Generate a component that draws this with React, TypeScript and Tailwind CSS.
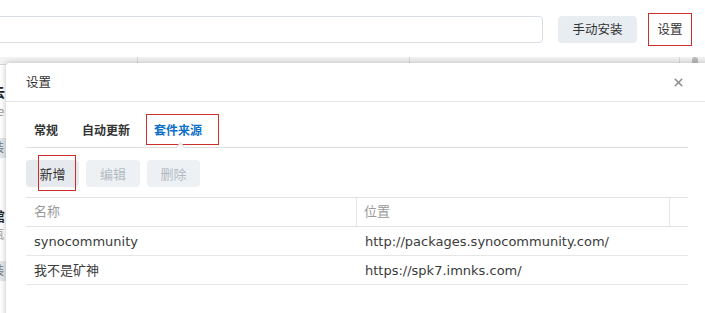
import { X } from "lucide-react";

const font = { fontFamily: '"DejaVu Sans", "Noto Sans CJK SC", sans-serif' };

const rows = [
  { name: "synocommunity", url: "http://packages.synocommunity.com/" },
  { name: "我不是矿神", url: "https://spk7.imnks.com/" },
];

function Background() {
  return (
    <div className="flex flex-col">
      {/* top toolbar */}
      <div className="flex items-center h-[57px] pt-[2px]">
        <div className="-ml-3 w-[555px] h-[27px] rounded border border-[#d9dee4] bg-white" />
        <button className="ml-[15px] h-[27px] w-[79px] rounded bg-[#e8edf2] text-[12.5px] text-[#333]">手动安装</button>
        <div className="ml-[11px] flex h-[33px] w-[44px] items-center justify-center border border-[#c9302c]">
          <span className="text-[12.5px] text-[#333]">设置</span>
        </div>
      </div>
      {/* list header behind dialog */}
      <div className="flex h-[8px] border-b border-[#d5d5d5] bg-[#f3f3f3]">
        <div className="w-[138px] border-r border-[#d9d9d9]" />
        <div className="w-[272px] border-r border-[#d9d9d9]" />
        <div className="w-[270px] border-r border-[#d9d9d9]" />
        <div className="ml-[12px] w-[6px] bg-[#bdbdbd] rounded-t" />
      </div>
      {/* left edge of list behind dialog */}
      <div className="-ml-[8px] flex flex-col text-[13px]">
        <div className="mt-[17px] font-bold text-[#222]">云</div>
        <div className="text-[12px] text-[#999]">se</div>
        <div className="mt-[18px] h-[20px] w-[14px] bg-[#e4e7eb] text-[12px] text-[#777]">装</div>
        <div className="mt-[48px] font-bold text-[#222]">館</div>
        <div className="text-[12px] text-[#999]">瓯</div>
        <div className="mt-[18px] h-[20px] w-[14px] bg-[#e4e7eb] text-[12px] text-[#777]">装</div>
      </div>
    </div>
  );
}

function Dialog() {
  return (
    <div className="absolute left-[6px] top-[63px] w-[702px] h-[260px] rounded-tl-[3px] bg-white shadow-[0_0_6px_rgba(0,0,0,0.25)]">
      {/* header */}
      <div className="flex h-[39px] items-center justify-between border-b border-[#e6e6e6] pl-5 pr-[23px]">
        <span className="text-[12.5px] text-[#333]">设置</span>
        <X className="h-[13px] w-[13px] text-[#8a8a8a]" strokeWidth={2.75} />
      </div>

      <div className="px-5">
        {/* tabs */}
        <div className="relative flex h-[46px] items-center gap-2 border-b border-[#dedede] pt-[10px] text-[12px] font-bold">
          <div className="px-2 text-[#333]">常规</div>
          <div className="px-2 text-[#333]">自动更新</div>
          <div className="relative px-2 text-[#0e6fc9]">
            套件来源
            <div className="absolute -top-[7px] left-0 h-[31px] w-[73px] border border-[#c9302c]" />
          </div>
          <div className="absolute -bottom-[4px] left-[151px] h-[7px] w-[7px] rotate-45 border-l border-t border-[#dedede] bg-white" />
        </div>

        {/* action buttons */}
        <div className="flex gap-[7px] pt-[12px] pb-[10px] text-[13px]">
          <button className="relative h-[27px] w-[53px] rounded bg-[#e6eaef] text-[#333]">
            新增
            <div className="absolute -top-[5px] left-[12px] h-[36px] w-[38px] border border-[#c9302c]" />
          </button>
          <button className="h-[27px] w-[54px] rounded bg-[#eef1f4] text-[#b3bac3]">编辑</button>
          <button className="h-[27px] w-[53px] rounded bg-[#eef1f4] text-[#b3bac3]">删除</button>
        </div>

        {/* table */}
        <div className="border-t border-[#e3e3e3] text-[13px]" style={font}>
          <div className="flex h-[29px] items-center border-b border-[#e3e3e3] text-[#9a9a9a]">
            <div className="flex h-full w-[331px] items-center border-r border-[#e6e6e6] pl-2">名称</div>
            <div className="flex h-full w-[313px] items-center border-r border-[#e6e6e6] pl-[7px]">位置</div>
          </div>
          {rows.map((r) => (
            <div key={r.name} className="flex h-[29px] items-center border-b border-[#e6e6e6] pt-[2px] text-[#3b3b3b]">
              <div className="w-[331px] pl-2">{r.name}</div>
              <div className="pl-[8px]">{r.url}</div>
            </div>
          ))}
        </div>
      </div>
    </div>
  );
}

export default function App() {
  return (
    <div
      className="relative h-[313px] w-[705px] overflow-hidden bg-white"
      style={{ fontFamily: '"Noto Sans CJK SC", "DejaVu Sans", sans-serif' }}
    >
      <Background />
      <Dialog />
    </div>
  );
}
